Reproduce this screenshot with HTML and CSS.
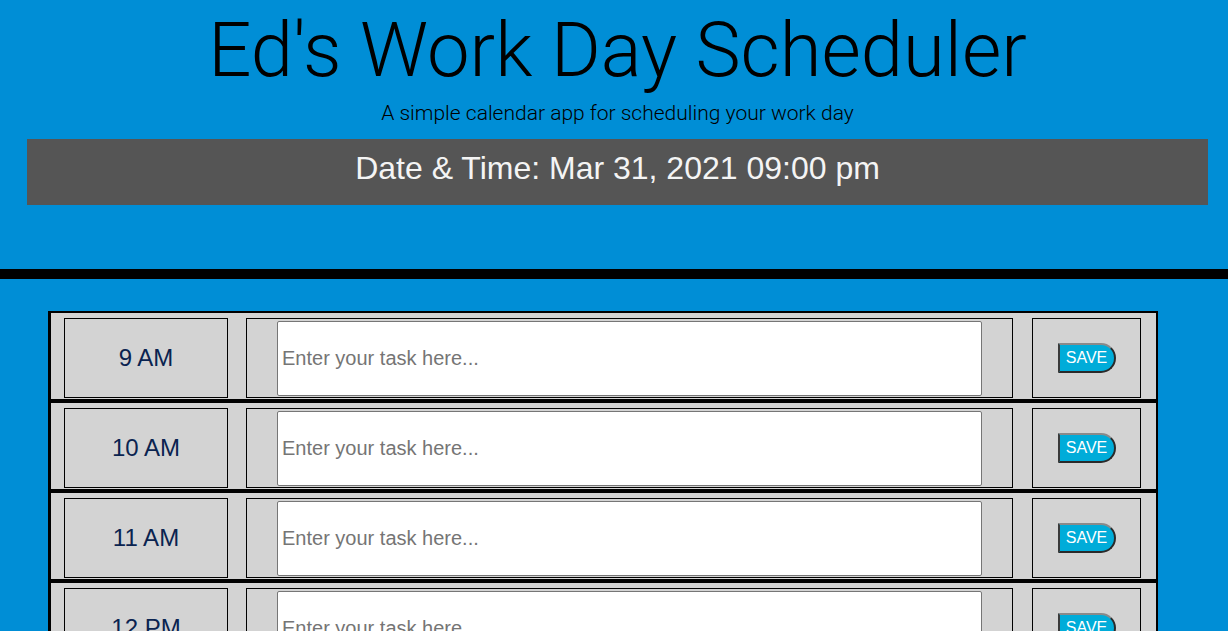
FILE: index.html
```html
<!DOCTYPE html>
<html lang="en">
<head>
<meta charset="utf-8">
<title>Ed's Work Day Scheduler</title>
<link rel="stylesheet" href="styles.css">
</head>
<body>
<header class="jumbotron">
  <h1 class="title">Ed's Work Day Scheduler</h1>
  <p class="lead">A simple calendar app for scheduling your work day</p>
  <div class="datebar">Date &amp; Time: Mar 31, 2021 09:00 pm</div>
</header>
<main class="scheduler">
  <div class="row">
    <div class="hour">9 AM</div>
    <div class="task"><input class="task-input" type="text" placeholder="Enter your task here..."></div>
    <div class="save"><button class="save-btn">SAVE</button></div>
  </div>
  <div class="row">
    <div class="hour">10 AM</div>
    <div class="task"><input class="task-input" type="text" placeholder="Enter your task here..."></div>
    <div class="save"><button class="save-btn">SAVE</button></div>
  </div>
  <div class="row">
    <div class="hour">11 AM</div>
    <div class="task"><input class="task-input" type="text" placeholder="Enter your task here..."></div>
    <div class="save"><button class="save-btn">SAVE</button></div>
  </div>
  <div class="row">
    <div class="hour">12 PM</div>
    <div class="task"><input class="task-input" type="text" placeholder="Enter your task here..."></div>
    <div class="save"><button class="save-btn">SAVE</button></div>
  </div>
  <div class="row">
    <div class="hour">1 PM</div>
    <div class="task"><input class="task-input" type="text" placeholder="Enter your task here..."></div>
    <div class="save"><button class="save-btn">SAVE</button></div>
  </div>
</main>
</body>
</html>
```
FILE: styles.css
```css
html, body {
  margin: 0;
  padding: 0;
}
body {
  background: #008ed6;
  font-family: "Liberation Sans", Arial, sans-serif;
  color: #000;
}
.jumbotron {
  height: 262px;
  box-sizing: content-box;
  border-bottom: 10px solid #000;
  padding-top: 7px;
}
.title {
  margin: 0;
  font-family: Roboto, "Liberation Sans", sans-serif;
  font-weight: 300;
  font-size: 76px;
  line-height: 86px;
  text-align: center;
  padding-left: 7px;
}
.lead {
  margin: 8px 0 0;
  font-family: Roboto, "Liberation Sans", sans-serif;
  font-weight: 300;
  font-size: 21px;
  line-height: 24px;
  text-align: center;
  padding-left: 7px;
}
.datebar {
  margin: 14px 20px 0 27px;
  height: 66px;
  background: #555555;
  color: #f4f4f4;
  font-size: 32px;
  line-height: 58px;
  text-align: center;
}
.scheduler {
  margin: 32px 0 0 48px;
  width: 1110px;
  box-sizing: border-box;
  border-top: 2px solid #000;
  border-left: 3px solid #000;
  border-right: 2px solid #000;
  background: #d3d3d3;
}
.row {
  display: flex;
  align-items: center;
  padding: 5px 0 1px 13px;
  border-bottom: 4px solid #000;
}
.hour {
  box-sizing: border-box;
  width: 164px;
  height: 80px;
  border: 1px solid #000;
  display: flex;
  align-items: center;
  justify-content: center;
  font-size: 24px;
  color: #0a2350;
}
.task {
  box-sizing: border-box;
  width: 767px;
  height: 80px;
  margin-left: 18px;
  border: 1px solid #000;
  padding: 2px 30px 1px;
}
.task-input {
  box-sizing: border-box;
  display: block;
  width: 100%;
  height: 75px;
  margin: 0;
  border: 1px solid #767676;
  border-radius: 2px;
  padding: 0 4px;
  background: #fff;
  font-family: "Liberation Sans", Arial, sans-serif;
  font-size: 20px;
  color: #222;
}
.task-input::placeholder {
  color: #757575;
}
.save {
  box-sizing: border-box;
  width: 109px;
  height: 80px;
  margin-left: 19px;
  border: 1px solid #000;
  display: flex;
  align-items: center;
  justify-content: center;
}
.save-btn {
  box-sizing: border-box;
  width: 58px;
  height: 30px;
  margin: 0;
  padding: 0 0 1px;
  background: #00acd9;
  color: #fff;
  font-family: "Liberation Sans", Arial, sans-serif;
  font-size: 16px;
  border-style: solid;
  border-width: 2px;
  border-color: #8a8a8a #2a2a2a #2a2a2a #3a3a3a;
  border-radius: 0 15px 15px 0;
}
```
